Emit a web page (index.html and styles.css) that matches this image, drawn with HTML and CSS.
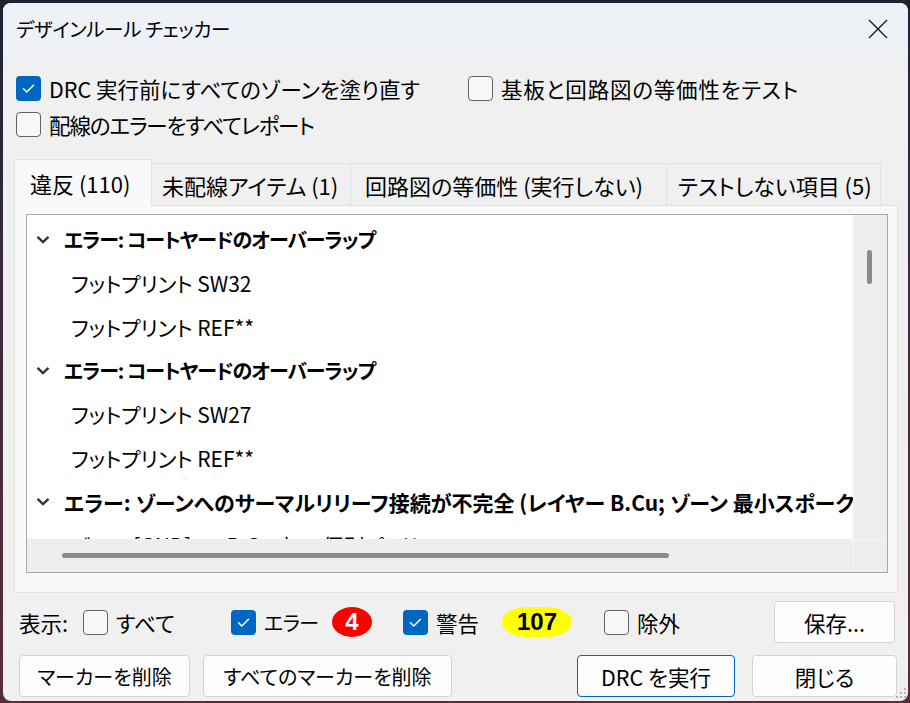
FILE: index.html
```html
<!DOCTYPE html>
<html lang="ja">
<head>
<meta charset="utf-8">
<title>デザインルール チェッカー</title>
<link rel="stylesheet" href="styles.css">
</head>
<body>
<div class="dialog">
  <div class="titlebar">
    <span class="title">デザインルール チェッカー</span>
    <svg class="close" width="22" height="22" viewBox="0 0 22 22"><path d="M2 2 L20 20 M20 2 L2 20" stroke="#1a1a1a" stroke-width="1.4" fill="none"/></svg>
  </div>
  <div class="content">
    <div class="options">
      <label class="opt"><span class="cb on"><svg viewBox="0 0 25 25" width="25" height="25"><path d="M7.5 12.8 L10.8 16 L17.5 9.2" stroke="#fff" stroke-width="1.5" fill="none" stroke-linecap="round" stroke-linejoin="round"/></svg></span>DRC 実行前にすべてのゾーンを塗り直す</label>
      <label class="opt wide"><span class="cb"></span>基板と回路図の等価性をテスト</label>
      <label class="opt kana"><span class="cb"></span>配線のエラーをすべてレポート</label>
    </div>
    <div class="tabs">
      <div class="tab active t1">違反 (110)</div>
      <div class="tab t2">未配線アイテム (1)</div>
      <div class="tab t3">回路図の等価性 (実行しない)</div>
      <div class="tab t4">テストしない項目 (5)</div>
    </div>
    <div class="panel">
      <div class="tree">
        <div class="tree-body">
          <div class="row head"><svg class="chev" width="14" height="9" viewBox="0 0 14 9"><path d="M1.5 1.8 L7 7 L12.5 1.8" stroke="#333" stroke-width="2.4" fill="none"/></svg><span>エラー: コートヤードのオーバーラップ</span></div>
          <div class="row child">フットプリント SW32</div>
          <div class="row child">フットプリント REF**</div>
          <div class="row head"><svg class="chev" width="14" height="9" viewBox="0 0 14 9"><path d="M1.5 1.8 L7 7 L12.5 1.8" stroke="#333" stroke-width="2.4" fill="none"/></svg><span>エラー: コートヤードのオーバーラップ</span></div>
          <div class="row child">フットプリント SW27</div>
          <div class="row child">フットプリント REF**</div>
          <div class="row head long"><svg class="chev" width="14" height="9" viewBox="0 0 14 9"><path d="M1.5 1.8 L7 7 L12.5 1.8" stroke="#333" stroke-width="2.4" fill="none"/></svg><span>エラー: ゾーンへのサーマルリリーフ接続が不完全 (レイヤー B.Cu; ゾーン 最小スポーク数 2; 実際 1)</span></div>
          <div class="row child">ゾーン [GND] on B.Cu 上の 個別パッド</div>
        </div>
        <div class="vscroll"><div class="vthumb"></div></div>
        <div class="hscroll"><div class="hthumb"></div></div>
        <div class="corner"></div>
      </div>
    </div>
    <div class="filters">
      <span class="show">表示:</span>
      <label class="opt f-all"><span class="cb"></span>すべて</label>
      <label class="opt f-err"><span class="cb on"><svg viewBox="0 0 25 25" width="25" height="25"><path d="M7.5 12.8 L10.8 16 L17.5 9.2" stroke="#fff" stroke-width="1.5" fill="none" stroke-linecap="round" stroke-linejoin="round"/></svg></span><span class="kana">エラー</span></label>
      <span class="badge red">4</span>
      <label class="opt f-warn"><span class="cb on"><svg viewBox="0 0 25 25" width="25" height="25"><path d="M7.5 12.8 L10.8 16 L17.5 9.2" stroke="#fff" stroke-width="1.5" fill="none" stroke-linecap="round" stroke-linejoin="round"/></svg></span>警告</label>
      <span class="badge yellow">107</span>
      <label class="opt f-excl"><span class="cb"></span>除外</label>
      <button class="btn save">保存...</button>
    </div>
    <div class="actions">
      <button class="btn b-del kana">マーカーを削除</button>
      <button class="btn b-delall kana">すべてのマーカーを削除</button>
      <button class="btn b-run default">DRC を実行</button>
      <button class="btn b-close">閉じる</button>
    </div>
  </div>
  <svg class="grip" width="12" height="12" viewBox="0 0 12 12"><g fill="#b5b5b5"><rect x="9" y="1" width="2" height="2"/><rect x="9" y="5" width="2" height="2"/><rect x="5" y="5" width="2" height="2"/><rect x="9" y="9" width="2" height="2"/><rect x="5" y="9" width="2" height="2"/><rect x="1" y="9" width="2" height="2"/></g></svg>
</div>
</body>
</html>
```

FILE: styles.css
```css
html, body {
  margin: 0;
  padding: 0;
  width: 910px;
  height: 703px;
  overflow: hidden;
}
body {
  background: linear-gradient(to bottom, #1c2434 0%, #3a2a3c 40%, #5b2b3e 100%);
  font-family: "Noto Sans CJK JP", "Noto Sans", sans-serif;
  font-feature-settings: "palt" 1;
  color: #000;
}
.dialog {
  position: relative;
  margin: 3px 0 0 3px;
  width: 905px;
  height: 698px;
  border-radius: 8px;
  overflow: hidden;
  background: #f0f0f0;
  display: flex;
  flex-direction: column;
}
.titlebar {
  height: 55px;
  flex: none;
  background: #eef2f7;
  display: flex;
  align-items: center;
  justify-content: space-between;
  padding: 0 19px 0 13px;
}
.title {
  font-size: 19.5px;
  letter-spacing: -0.3px;
  padding-bottom: 4px;
}
.close {
  display: block;
  margin-bottom: 3px;
}
.content {
  flex: 1;
  display: flex;
  flex-direction: column;
}
.options {
  display: grid;
  grid-template-columns: 452px auto;
  row-gap: 11px;
  padding: 18px 0 0 13px;
}
.opt {
  display: flex;
  align-items: center;
  gap: 8px;
  font-size: 21.5px;
  height: 25px;
  line-height: 25px;
  white-space: nowrap;
}
.options .kana {
  letter-spacing: -1.1px;
}
.options .wide {
  letter-spacing: 0.8px;
}
.cb {
  flex: none;
  width: 25px;
  height: 25px;
  box-sizing: border-box;
  border: 1.5px solid #636363;
  border-radius: 4px;
  background: #f8f8f8;
  display: block;
}
.cb.on {
  border: none;
  background: #0067c0;
}
.cb svg {
  display: block;
}
.tabs {
  display: flex;
  align-items: flex-end;
  margin: 22px 0 0 11px;
  height: 46px;
  position: relative;
  z-index: 1;
}
.tab {
  box-sizing: border-box;
  height: 42px;
  border: 1px solid #e2e2e2;
  border-bottom: none;
  margin-left: -1px;
  background: #f0f0f0;
  font-size: 22px;
  display: flex;
  align-items: center;
  white-space: nowrap;
}
.tab.active {
  height: 47px;
  margin-bottom: -1px;
  background: #f9f9f9;
  margin-left: 0;
}
.t1 { width: 138px; padding-left: 15px; }
.t2 { width: 200px; padding-left: 10px; }
.t3 { width: 317px; padding-left: 14px; }
.t4 { width: 215px; padding-left: 11px; }
.panel {
  box-sizing: border-box;
  margin-left: 11px;
  width: 884px;
  height: 388px;
  border: 1px solid #e2e2e2;
  background: #f9f9f9;
  padding: 8px 0 0 11px;
}
.tree {
  box-sizing: border-box;
  width: 862px;
  height: 359px;
  border: 1px solid #a8a8a8;
  background: #fff;
  display: grid;
  grid-template-columns: 826px 34px;
  grid-template-rows: 324px 33px;
}
.tree-body {
  overflow: hidden;
  padding-top: 3px;
  box-sizing: border-box;
}
.row {
  height: 43.67px;
  display: flex;
  align-items: center;
  font-size: 21px;
  white-space: nowrap;
  overflow: hidden;
}
.row.head {
  font-weight: 700;
  font-size: 20px;
  letter-spacing: -1px;
  padding-left: 9px;
}
.row.head.long {
  font-size: 21px;
  letter-spacing: 0;
}
.row.head .chev {
  flex: none;
  margin-right: 14px;
  display: block;
}
.row.child {
  padding-left: 44px;
}
.vscroll {
  background: #eeeeee;
  padding: 35px 0 0 14px;
  box-sizing: border-box;
}
.vthumb {
  width: 5px;
  height: 34px;
  border-radius: 3px;
  background: #8a8a8a;
}
.hscroll {
  background: #eeeeee;
  padding: 14px 0 0 35px;
  box-sizing: border-box;
}
.hthumb {
  width: 607px;
  height: 5px;
  border-radius: 3px;
  background: #8a8a8a;
}
.corner {
  background: #eeeeee;
  border-left: 1px solid #f7f7f7;
  border-top: 1px solid #f7f7f7;
}
.filters {
  display: flex;
  align-items: center;
  height: 42px;
  margin-top: 8px;
  padding-left: 16px;
}
.show {
  width: 64px;
  font-size: 21.5px;
  flex: none;
}
.filters .kana {
  font-size: 20px;
  letter-spacing: -0.6px;
}
.f-all { width: 148px; }
.f-err { width: 101px; }
.f-warn { width: 99px; }
.f-excl { width: 170px; }
.badge {
  flex: none;
  height: 30px;
  font-family: "Liberation Sans", Arial, sans-serif;
  font-weight: 700;
  font-size: 24px;
  display: flex;
  align-items: center;
  justify-content: center;
}
.badge.red {
  width: 40px;
  margin-right: 31px;
  background: #ff0000;
  color: #fff;
  border-radius: 50%;
}
.badge.yellow {
  width: 70px;
  margin-right: 32px;
  background: #ffff00;
  color: #000;
  border-radius: 24px / 15px;
}
.btn {
  box-sizing: border-box;
  height: 42px;
  background: #fdfdfd;
  border: 1px solid #d3d3d3;
  border-radius: 4px;
  font-family: "Noto Sans CJK JP", "Noto Sans", sans-serif;
  font-feature-settings: "palt" 1;
  font-size: 21.5px;
  color: #000;
  padding: 0;
  flex: none;
}
.btn.kana {
  font-size: 20px;
}
.btn.default {
  border-color: #0067c0;
}
.save { width: 121px; }
.actions {
  display: flex;
  align-items: center;
  margin-top: 12px;
  padding-left: 16px;
}
.b-del { width: 171px; margin-right: 13px; }
.b-delall { width: 249px; margin-right: 125px; }
.b-run { width: 158px; margin-right: 17px; }
.b-close { width: 145px; }
.grip {
  position: absolute;
  right: 1px;
  bottom: 2px;
}
```
